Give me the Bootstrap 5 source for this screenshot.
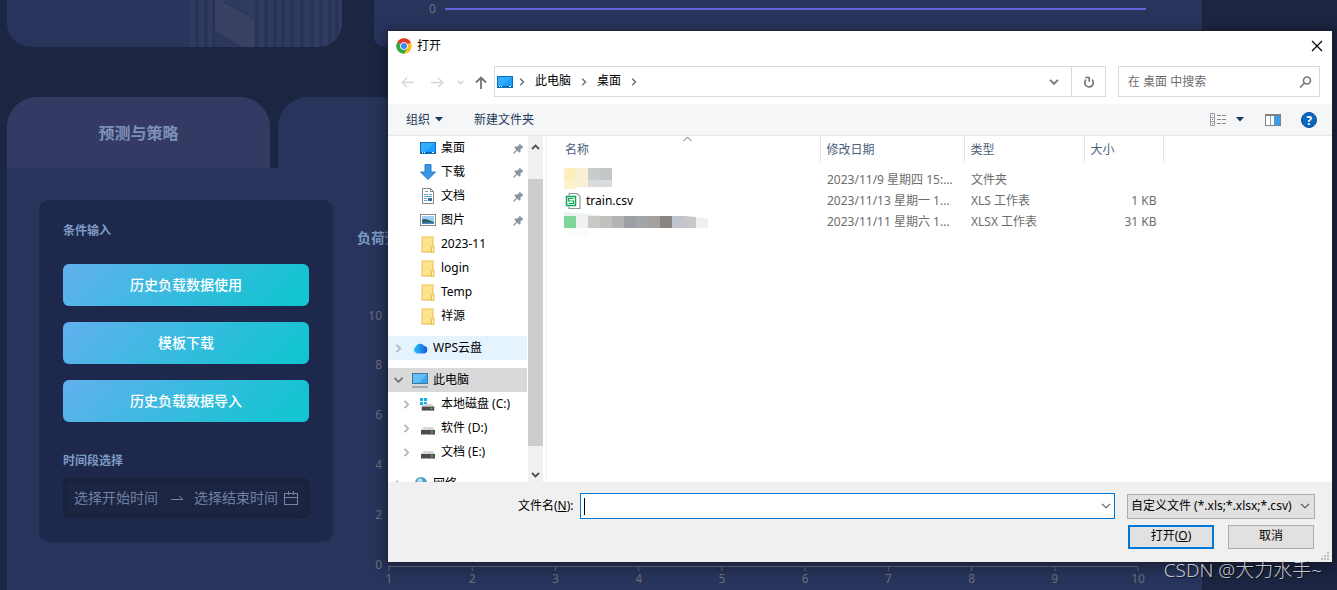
<!DOCTYPE html>
<html lang="zh-CN">
<head>
<meta charset="utf-8">
<meta name="viewport" content="width=device-width, initial-scale=1">
<title>预测与策略</title>
<link href="https://cdn.jsdelivr.net/npm/bootstrap@5.3.0/dist/css/bootstrap.min.css" rel="stylesheet">
<style>
  body { background:#1c2541; font-family:"Noto Sans","Noto Sans CJK SC",sans-serif; font-size:12px; line-height:18px; color:#000; }
  button, input, select { font-family:inherit; }
  .page { padding:0 135px 0 7px; }
  .top-cards { height:47px; gap:32px; margin-bottom:50px; }
  .stat-card { width:335px; background:#28345c; border-radius:0 0 24px 24px; }
  .trend-card { background:#28345c; border-radius:0 0 10px 10px; padding:0 56px 0 55px; color:#6e7079; gap:9px; }
  .trend-line { height:2px; background:#6264d8; }
  .tab-strip { gap:8px; }
  .tab-btn { width:263px; height:71px; border:0; border-radius:30px 30px 0 0; background:#28345c; color:#7d90b4; font-size:16px; font-weight:700; }
  .tab-btn.active { background:#343a64; }
  .panel { background:#28345c; padding:32px 64px 0 32px; gap:24px; }
  .cond-card { width:294px; height:342px; padding:22px 24px; border-radius:10px; background:#1e284c; }
  .cond-title { font-size:12px; font-weight:700; line-height:18px; margin:0; color:#7d9cc4; }
  .range-title { margin:30px 0 8px; }
  .cond-btn { height:42px; border:0; border-radius:6px; color:#fff; font-size:14px; font-weight:500; background:linear-gradient(135deg,#62b0ee 0%,#14c4d2 90%); }
  .range-box { height:40px; border-radius:6px; background:#1c2541; box-shadow:inset 0 0 5px rgba(0,0,0,.25); padding:0 11px; }
  .range-box input { width:86px; padding:0; border:0; background:none; font-size:14px; color:#7585a8; }
  .range-box input::placeholder { color:#7080a4; opacity:1; }
  .chart-title { font-size:14px; font-weight:700; color:#7d9cc4; margin:28px 0 57px; line-height:20px; }
  .chart text { font-size:12px; fill:#6e7079; }
  .y-axis { width:32px; }

  .dlg { left:388px; right:5px; top:31px; background:#fff; box-shadow:0 0 0 1px rgba(30,30,40,.55),0 3px 14px 2px rgba(0,0,0,.4); }
  .dlg button { border:0; background:none; padding:0; color:inherit; }
  .title-bar { height:35px; padding:0 7px 6px 8px; gap:5px; }
  .nav-row { padding:0 12px 7px 4px; }
  .w-30 { width:30px; } .w-16 { width:16px; } .w-26 { width:26px; }
  .addr { height:31px; border:1px solid #d9d9d9; padding-left:2px; margin-right:12px; }
  .sep { width:18px; }
  .addr a { color:#000; padding:0 4px 1px; text-decoration:none; }
  .dlg .addr .refresh { width:34px; border-left:1px solid #d9d9d9; }
  .search { width:202px; height:31px; border:1px solid #d9d9d9; padding:0 7px 0 9px; }
  .search input { border:0; padding:0; min-width:0; color:#6d6d6d; }
  .search input::placeholder { color:#6d6d6d; opacity:1; }
  .tool-bar { height:32px; background:#f5f6f7; border-bottom:1px solid #e4e6e8; padding:0 15px 0 18px; color:#1e395b; }
  .new-dir { margin-left:30px; }
  .main-area { height:346px; overflow:hidden; }
  .tree { width:139px; }
  .tree-row { height:24px; padding-right:3px; color:#000; text-decoration:none; white-space:nowrap; }
  .tree-row .tw { width:21px; flex:none; }
  .lvl2 { padding-left:8px; }
  .tree-row .ic { width:24px; padding-left:3px; flex:none; display:flex; }
  .hot { background:#e5f3ff; } .cur { background:#d9d9d9; }
  .scroll-bar { width:15px; margin-left:1px; background:#f0f0f0; }
  .thumb { background:#cdcdcd; height:267px; margin-top:21px; }
  .split { width:4px; border-right:1px solid #f0f0f0; }
  .files { table-layout:fixed; width:617px; color:#6d6d6d; }
  .files th { height:27px; font-weight:400; color:#4c607a; border-right:1px solid #e5e5e5; padding:0 6px; position:relative; }
  .files td { height:21px; padding:0 7px; white-space:nowrap; overflow:hidden; text-overflow:ellipsis; line-height:20px; }
  .files th:first-child { padding-left:18px; }
  .files td:first-child { padding-left:17px; overflow:visible; }
  .files .gap-row td { height:6px; }
  .sort { left:50%; top:-3px; line-height:0; }
  .files svg { display:block; overflow:visible; }
  .foot { background:#f0f0f0; height:80px; padding:11px 17px 0 130px; }
  .foot label { margin-right:6px; }
  .name-input { height:26px; border:1px solid #0078d7; border-radius:0; font-size:12px; padding:0 24px 0 8px; }
  .caret-bar { left:4px; top:5px; width:1px; height:17px; background:#000; }
  .name-drop { right:4px; top:0; height:26px; }
  .type-select { width:188px; height:25px; margin-left:12px; border:1px solid #adadad; border-radius:0; background-color:#e1e1e1; font-size:12px; line-height:18px; color:#000; padding:0 18px 1px 3px; background-position:right 4px center; background-size:10px 6px; --bs-form-select-bg-img:url("data:image/svg+xml,%3Csvg xmlns='http://www.w3.org/2000/svg' viewBox='0 0 10 6'%3E%3Cpath d='M1 .8 5 4.8 9 .8' fill='none' stroke='%23444' stroke-width='1.1'/%3E%3C/svg%3E"); }
  .acts { gap:14px; margin:6px 1px 0 0; }
  .dlg .act { width:86px; height:24px; background:#e1e1e1; border:1px solid #adadad; padding-bottom:2px; }
  .dlg .act.main { border:2px solid #0078d7; }
  .grip { right:3px; bottom:2px; line-height:0; }
  .wm { right:15px; top:557px; font-size:19px; line-height:26px; color:rgba(225,228,236,.85); font-weight:300; text-shadow:1px 1px 1px rgba(0,0,0,.6); }
</style>
</head>
<body class="vh-100 overflow-hidden position-relative">

<svg class="d-none">
  <symbol id="desk" viewBox="0 0 16 12"><rect x=".5" y=".5" width="15" height="11" fill="#1a9fff" stroke="#0a72bd"/><path d="M1 1h14L4 10H1z" fill="#35adff"/><path d="M1 10h14v1H1z" fill="#0a63a8"/><path d="M2 10.500h1M4 10.500h1M12 10.500h2" stroke="#fff"/></symbol>
  <symbol id="fold" viewBox="0 0 14 17"><rect x="1" y="1" width="11" height="15" fill="#ffe28d" stroke="#e8c04c"/><path d="M11 10h2v6.500h-3z" fill="#fff0b5" stroke="#e5b93f"/></symbol>
  <symbol id="pin" viewBox="0 0 11 11"><path d="M6.500.500 10.500 4.500 9 5 7.500 6.500 7.500 9 6 9.500 1.500 5 2 3.500 4.500 3.500 6 2z" fill="#8796a5"/><path d="M4 7 .500 10.500" stroke="#8796a5" stroke-width="1.300"/></symbol>
  <symbol id="disk" viewBox="0 0 15 9"><path d="M3 1h9l2.500 3H.5z" fill="#d5d5d5"/><rect x=".5" y="4" width="14" height="4.500" fill="#4b4b4b"/><path d="M10.500 6h2" stroke="#35e04a" stroke-width="1.500"/></symbol>
  <symbol id="right" viewBox="0 0 6 9"><path d="M1 .8 4.700 4.500 1 8.200" fill="none" stroke="currentColor" stroke-width="1.700"/></symbol>
  <symbol id="down" viewBox="0 0 10 6"><path d="M1 .8 5 4.800 9 .8" fill="none" stroke="currentColor" stroke-width="1.800"/></symbol>
</svg>

<main class="page h-100 d-flex flex-column">
  <div class="top-cards d-flex flex-shrink-0">
    <section class="stat-card flex-shrink-0 overflow-hidden d-flex justify-content-end">
      <svg width="160" height="47">
        <defs><linearGradient id="fade"><stop offset="0" stop-color="#28345c"/><stop offset="1" stop-color="#25375f"/></linearGradient></defs>
        <rect width="8" height="47" fill="url(#fade)"/><rect x="8" width="152" height="47" fill="#313b5f"/>
        <path d="M15 0v47M24 0v47M32 0v47M75 0v47M84 0v47M93 0v47M101 0v47M110 0v47M120 0v47M130 0v47M139 0v47M148 0v47M155 0v47" stroke="#29335a" stroke-width="3"/>
        <path d="M33 0H41L72 20V47H60L33 30z" fill="#394263"/><path d="M42 2 64 14M48 0 65 9" stroke="#2d375c" stroke-width="1.500" fill="none"/><path d="M33 30 60 47H33z" fill="#2e385d"/>
      </svg>
    </section>
    <section class="trend-card flex-grow-1 d-flex align-items-start">
      <span>0</span>
      <div class="trend-line flex-grow-1 mt-2"></div>
    </section>
  </div>

  <nav class="tab-strip d-flex flex-shrink-0">
    <button class="tab-btn active" type="button">预测与策略</button>
    <button class="tab-btn" type="button" aria-label="策略"></button>
  </nav>

  <section class="panel d-flex flex-grow-1 align-items-start">
    <form class="cond-card flex-shrink-0">
      <h2 class="cond-title mb-4">条件输入</h2>
      <div class="d-grid gap-3">
        <button class="cond-btn" type="button">历史负载数据使用</button>
        <button class="cond-btn" type="button">模板下载</button>
        <button class="cond-btn" type="button">历史负载数据导入</button>
      </div>
      <label class="cond-title range-title d-block" for="start">时间段选择</label>
      <div class="range-box d-flex align-items-center">
        <input id="start" type="text" placeholder="选择开始时间">
        <svg class="mx-auto" width="14" height="8" fill="none" stroke="#7585a8"><path d="M1 5.500h12L9 2"/></svg>
        <input type="text" placeholder="选择结束时间" aria-label="选择结束时间">
        <svg class="ms-1" width="14" height="14" fill="none" stroke="#7585a8"><rect x=".5" y="2.500" width="13" height="11"/><path d="M1 6.500h12M4.500 0v4M9.500 0v4"/></svg>
      </div>
    </form>
    <div class="flex-grow-1">
      <h2 class="chart-title">负荷预测</h2>
      <div class="chart d-flex">
        <svg class="y-axis flex-shrink-0 overflow-visible" height="270">
          <g text-anchor="end"><text x="25" y="15">10</text><text x="25" y="64">8</text><text x="25" y="114">6</text><text x="25" y="164">4</text><text x="25" y="214">2</text><text x="25" y="264">0</text></g>
        </svg>
        <svg class="flex-grow-1 overflow-visible" height="270" id="plot">
          <circle cx="0" cy="236" r="2" fill="#4a4fb0"/>
          <g stroke="#6e7079"><line x1="0" x2="100%" y1="261.500" y2="261.500"/>
          <line x1="0" x2="0" y1="261" y2="266"/><line x1="11.11%" x2="11.11%" y1="261" y2="266"/><line x1="22.22%" x2="22.22%" y1="261" y2="266"/><line x1="33.33%" x2="33.33%" y1="261" y2="266"/><line x1="44.44%" x2="44.44%" y1="261" y2="266"/><line x1="55.56%" x2="55.56%" y1="261" y2="266"/><line x1="66.67%" x2="66.67%" y1="261" y2="266"/><line x1="77.78%" x2="77.78%" y1="261" y2="266"/><line x1="88.89%" x2="88.89%" y1="261" y2="266"/><line x1="100%" x2="100%" y1="261" y2="266"/></g>
          <g text-anchor="middle"><text x="0" y="278">1</text><text x="11.11%" y="278">2</text><text x="22.22%" y="278">3</text><text x="33.33%" y="278">4</text><text x="44.44%" y="278">5</text><text x="55.56%" y="278">6</text><text x="66.67%" y="278">7</text><text x="77.78%" y="278">8</text><text x="88.89%" y="278">9</text><text x="100%" y="278">10</text></g>
        </svg>
      </div>
    </div>
  </section>
</main>

<div class="dlg position-absolute" role="dialog" aria-label="打开">
  <header class="title-bar d-flex align-items-center">
    <svg width="16" height="16" viewBox="0 0 48 48"><circle cx="24" cy="24" r="23" fill="#fbc116"/><path d="M24 24 4 12.500A23 23 0 0 1 44 12.500z" fill="#e33b2e"/><path d="M24 24 4 12.500A23 23 0 0 0 24 47L34 30z" fill="#2da94f"/><path d="M24 12.500H44" stroke="#e33b2e" stroke-width="3"/><circle cx="24" cy="24" r="11.500" fill="#fff"/><circle cx="24" cy="24" r="9" fill="#4285f4"/></svg>
    <span>打开</span>
    <button type="button" class="ms-auto d-flex" aria-label="关闭"><svg width="16" height="16" stroke="#000" stroke-width="1.200"><path d="M3 3 13 13M13 3 3 13"/></svg></button>
  </header>

  <div class="nav-row d-flex align-items-center">
    <button type="button" class="w-30" aria-label="后退"><svg width="13" height="11" fill="none" stroke="#d8d8d8" stroke-width="1.500"><path d="M13 5.500H1M6 .8 1.300 5.500 6 10.200"/></svg></button>
    <button type="button" class="w-30" aria-label="前进"><svg width="13" height="11" fill="none" stroke="#d8d8d8" stroke-width="1.500"><path d="M0 5.500H12M7 .8 11.700 5.500 7 10.200"/></svg></button>
    <button type="button" class="w-16" aria-label="历史"><svg width="7" height="5" color="#d0d0d0"><use href="#down"/></svg></button>
    <button type="button" class="w-26" aria-label="向上"><svg width="12" height="13" fill="none" stroke="#737373" stroke-width="1.800"><path d="M6 13V2M1 6.500 6 1.500 11 6.500"/></svg></button>
    <div class="addr d-flex align-items-center flex-grow-1">
      <svg width="16" height="12"><use href="#desk"/></svg>
      <svg class="sep" height="8" color="#737373"><use href="#right"/></svg>
      <a href="#">此电脑</a>
      <svg class="sep" height="8" color="#737373"><use href="#right"/></svg>
      <a href="#">桌面</a>
      <svg class="sep" height="8" color="#737373"><use href="#right"/></svg>
      <button type="button" class="ms-auto me-2 px-1 d-flex" aria-label="展开"><svg width="10" height="6" color="#737373"><use href="#down"/></svg></button>
      <button type="button" class="refresh h-100" aria-label="刷新"><svg width="12" height="13" fill="none" stroke="#737373" stroke-width="1.600"><path d="M9 3.500A4.300 4.300 0 1 1 3 3.600M2.200 1.500h4v4.300"/></svg></button>
    </div>
    <div class="search d-flex align-items-center">
      <input class="flex-grow-1" type="text" placeholder="在 桌面 中搜索" aria-label="搜索">
      <svg width="13" height="12" fill="none" stroke="#737373" stroke-width="1.600"><circle cx="8" cy="4.500" r="3.500"/><path d="M5.500 7 1 11.500"/></svg>
    </div>
  </div>

  <div class="tool-bar d-flex align-items-center">
    <button type="button" class="d-flex align-items-center">组织<svg class="ms-1" width="10" height="5"><path d="M1 0h8L5 4.500z" fill="#1e395b"/></svg></button>
    <button type="button" class="new-dir">新建文件夹</button>
    <button type="button" class="ms-auto me-3 d-flex align-items-center" aria-label="视图">
      <svg width="17" height="13"><path d="M.5.500h4v12h-4zM.5 4.500h4M.5 8.500h4" fill="#fff" stroke="#999"/><path d="M2 2.500h1" stroke="#999"/><path d="M2 6.500h1" stroke="#2674c8"/><path d="M2 10.500h1" stroke="#c33"/><path d="M7 2.500h10M7 6.500h10M7 10.500h10" stroke="#868686" stroke-dasharray="4 1"/></svg>
      <svg class="ms-2" width="10" height="5"><path d="M1 0h8L5 4.500z" fill="#1e395b"/></svg>
    </button>
    <button type="button" class="ms-1 d-flex" aria-label="预览窗格"><svg width="16" height="12"><rect x=".5" y=".5" width="15" height="11" fill="#fff" stroke="#808080"/><path d="M0 1h16" stroke="#808080" stroke-width="2"/><path d="M5.500 2v9" stroke="#a0a0a0"/><rect x="9" y="2" width="6" height="9" fill="#3f9de8"/></svg></button>
    <button type="button" class="ms-3 ps-1 d-flex" aria-label="帮助"><svg width="16" height="16"><circle cx="8" cy="8" r="7.500" fill="#0b67bd" stroke="#0a4f91"/><text x="8" y="12.500" text-anchor="middle" font-size="12" font-weight="700" fill="#fff">?</text></svg></button>
  </div>

  <div class="main-area d-flex">
    <nav class="tree flex-shrink-0">
      <a href="#" class="tree-row lvl2 d-flex align-items-center"><span class="tw"></span><span class="ic"><svg width="16" height="12"><use href="#desk"/></svg></span><span>桌面</span><svg class="ms-auto" width="11" height="11"><use href="#pin"/></svg></a>
      <a href="#" class="tree-row lvl2 d-flex align-items-center"><span class="tw"></span><span class="ic"><svg width="16" height="16"><path d="M5 .5h6V8h4.500L8 15.500.5 8H5z" fill="#3a95e4" stroke="#2b7fce"/></svg></span><span>下载</span><svg class="ms-auto" width="11" height="11"><use href="#pin"/></svg></a>
      <a href="#" class="tree-row lvl2 d-flex align-items-center"><span class="tw"></span><span class="ic"><svg width="16" height="16"><path d="M2.500.5h8l3 3v12h-11z" fill="#fff" stroke="#868686"/><path d="M10.500.5v3h3" fill="none" stroke="#868686"/><path d="M5 3.500h3M4 6.500h4M9 6.500h3M4 8.500h8M4 10.500h3M4 12.500h3" stroke="#5a9fc5"/><rect x="8" y="10" width="4" height="3" fill="#33719b"/></svg></span><span>文档</span><svg class="ms-auto" width="11" height="11"><use href="#pin"/></svg></a>
      <a href="#" class="tree-row lvl2 d-flex align-items-center"><span class="tw"></span><span class="ic"><svg width="16" height="12"><rect x=".5" y=".5" width="15" height="11" fill="#fff" stroke="#8a8a8a"/><rect x="2" y="2" width="12" height="8" fill="#9fcdf0"/><path d="M2 5.500 6 5l8 3v2H2z" fill="#2c5f63"/><path d="M2 8.500h12V10H2z" fill="#4a88c7"/></svg></span><span>图片</span><svg class="ms-auto" width="11" height="11"><use href="#pin"/></svg></a>
      <a href="#" class="tree-row lvl2 d-flex align-items-center"><span class="tw"></span><span class="ic"><svg width="16" height="17"><use href="#fold"/></svg></span><span>2023-11</span></a>
      <a href="#" class="tree-row lvl2 d-flex align-items-center"><span class="tw"></span><span class="ic"><svg width="16" height="17"><use href="#fold"/></svg></span><span>login</span></a>
      <a href="#" class="tree-row lvl2 d-flex align-items-center"><span class="tw"></span><span class="ic"><svg width="16" height="17"><use href="#fold"/></svg></span><span>Temp</span></a>
      <a href="#" class="tree-row lvl2 d-flex align-items-center mb-2"><span class="tw"></span><span class="ic"><svg width="16" height="17"><use href="#fold"/></svg></span><span>祥源</span></a>
      <a href="#" class="tree-row hot d-flex align-items-center mb-2"><svg class="tw" height="9" color="#b0b8be"><use href="#right"/></svg><span class="ic"><svg width="16" height="12"><defs><linearGradient id="cl"><stop offset="0" stop-color="#27c6ee"/><stop offset="1" stop-color="#1458ea"/></linearGradient></defs><path d="M5 11.500A3.700 3.700 0 0 1 4 4.500 4.600 4.600 0 0 1 12 3.800 3.900 3.900 0 0 1 12 11.500z" fill="url(#cl)"/></svg></span><span>WPS云盘</span></a>
      <a href="#" class="tree-row cur d-flex align-items-center"><svg class="tw" height="6" color="#737373"><use href="#down"/></svg><span class="ic"><svg width="16" height="15"><rect x=".5" y=".5" width="15" height="10" fill="#38a9f5" stroke="#4b748f"/><path d="M1 1h14L7 10H1z" fill="#62bffa"/><path d="M0 14h16" stroke="#6b7f8e"/></svg></span><span>此电脑</span></a>
      <a href="#" class="tree-row lvl2 d-flex align-items-center"><svg class="tw" height="9" color="#b0b0b0"><use href="#right"/></svg><span class="ic"><svg width="16" height="13"><path d="M0 0h3v3H0zM4 0h3v3H4zM0 4h3v3H0zM4 4h3v3H4z" fill="#0eb4e8"/><use href="#disk" y="5" x="1" width="14" height="8"/></svg></span><span>本地磁盘 (C:)</span></a>
      <a href="#" class="tree-row lvl2 d-flex align-items-center"><svg class="tw" height="9" color="#b0b0b0"><use href="#right"/></svg><span class="ic"><svg class="mt-1" width="16" height="9"><use href="#disk"/></svg></span><span>软件 (D:)</span></a>
      <a href="#" class="tree-row lvl2 d-flex align-items-center mb-2"><svg class="tw" height="9" color="#b0b0b0"><use href="#right"/></svg><span class="ic"><svg class="mt-1" width="16" height="9"><use href="#disk"/></svg></span><span>文档 (E:)</span></a>
      <a href="#" class="tree-row d-flex align-items-center"><svg class="tw" height="9" color="#b0b0b0"><use href="#right"/></svg><span class="ic"><svg width="16" height="16"><circle cx="9" cy="7" r="6" fill="#4d9cc8"/><path d="M5 4 9 2l2 3-4 3z" fill="#b9e0f2"/></svg></span><span>网络</span></a>
    </nav>
    <div class="scroll-bar d-flex flex-column align-items-center flex-shrink-0">
      <svg class="my-2" width="9" height="6" fill="none" stroke="#505050" stroke-width="1.800"><path d="M1 5 4.500 1.500 8 5"/></svg>
      <div class="thumb w-100"></div>
      <svg class="mt-auto mb-1" width="9" height="6" fill="none" stroke="#505050" stroke-width="1.800"><path d="M1 1 4.500 4.500 8 1"/></svg>
    </div>
    <div class="split flex-shrink-0"></div>
    <div class="flex-grow-1">
      <table class="files">
        <colgroup><col style="width:273px"><col style="width:144px"><col style="width:120px"><col></colgroup>
        <thead><tr>
          <th scope="col">名称<span class="sort position-absolute"><svg width="9" height="9" fill="none" stroke="#6d6d6d"><path d="M.5 8 4.500 4 8.500 8"/></svg></span></th>
          <th scope="col">修改日期</th><th scope="col">类型</th><th scope="col">大小</th>
        </tr></thead>
        <tbody>
          <tr class="gap-row"><td colspan="4"></td></tr>
          <tr>
            <td><svg width="48" height="17"><g transform="translate(0 -3)"><path d="M0 0h12v12H0z" fill="#fdeec0"/><path d="M12 0h12v19H12z" fill="#f8efd6"/><path d="M0 12h12v9H0z" fill="#fdf2cf"/><path d="M24 0h12v12H24z" fill="#c9cbcd"/><path d="M36 0h12v12H36z" fill="#c3c7c8"/><path d="M24 12h24v7H24z" fill="#d9dadd"/></g></svg></td>
            <td>2023/11/9 星期四 15:...</td><td>文件夹</td><td></td>
          </tr>
          <tr>
            <td class="text-black"><span class="d-flex align-items-center"><svg class="me-1" width="18" height="16" fill="none"><path d="M5 2.500v-2h8l3 3v12H5v-2" stroke="#8d96a5" stroke-width="1.200" fill="#fff"/><rect x="2.500" y="3.500" width="9" height="9" fill="#fff" stroke="#12a552" stroke-width="1.500"/><path d="M9.500 5.500h-5V8h5v2.500h-5" stroke="#12a552" stroke-width="1.200"/></svg>train.csv</span></td>
            <td>2023/11/13 星期一 1...</td><td>XLS 工作表</td><td class="text-end">1 KB</td>
          </tr>
          <tr>
            <td><svg width="144" height="12"><path d="M0-4 24-2 40 0H0z" fill="#eaf2ee"/><path d="M0 0h12v12H0z" fill="#80d59b"/><path d="M12 0h12v12H12z" fill="#f0f1f1"/><path d="M24 0h12v12H24z" fill="#c9c8c4"/><path d="M36 0h12v12H36z" fill="#c2c0bc"/><path d="M48 0h12v12H48z" fill="#b6b3b5"/><path d="M60 0h12v12H60z" fill="#9c9fa6"/><path d="M72 0h12v12H72z" fill="#a2a6a7"/><path d="M84 0h12v12H84z" fill="#a7a19d"/><path d="M96 0h12v12H96z" fill="#888583"/><path d="M108 0h12v12h-12z" fill="#c1c5d0"/><path d="M120 0 132 1V12H120z" fill="#cac6ca"/><path d="M132 1 144 3V12H132z" fill="#f0f0f2"/><path d="M0 12h24v9H4z" fill="#fafbfb"/></svg></td>
            <td>2023/11/11 星期六 1...</td><td>XLSX 工作表</td><td class="text-end">31 KB</td>
          </tr>
        </tbody>
      </table>
    </div>
  </div>

  <footer class="foot position-relative">
    <div class="d-flex align-items-center">
      <label for="fname">文件名(<u>N</u>):</label>
      <div class="position-relative flex-grow-1">
        <input id="fname" class="name-input form-control" type="text">
        <span class="caret-bar position-absolute"></span>
        <button type="button" class="name-drop position-absolute d-flex align-items-center" aria-label="历史文件名"><svg width="10" height="6" fill="none" stroke="#555" stroke-width="1.100"><path d="M1 .8 5 4.800 9 .8"/></svg></button>
      </div>
      <select class="type-select form-select" aria-label="文件类型"><option>自定义文件 (*.xls;*.xlsx;*.csv)</option></select>
    </div>
    <div class="acts d-flex justify-content-end">
      <button type="button" class="act main">打开(<u>O</u>)</button>
      <button type="button" class="act">取消</button>
    </div>
    <span class="grip position-absolute"><svg width="8" height="8" fill="#bfbfbf"><path d="M6 0h2v2H6zM3 3h2v2H3zM6 3h2v2H6zM0 6h2v2H0zM3 6h2v2H3zM6 6h2v2H6z"/></svg></span>
  </footer>
</div>

<div class="wm position-absolute">CSDN @大力水手~</div>

<script src="https://cdn.jsdelivr.net/npm/bootstrap@5.3.0/dist/js/bootstrap.bundle.min.js"></script>
</body>
</html>
